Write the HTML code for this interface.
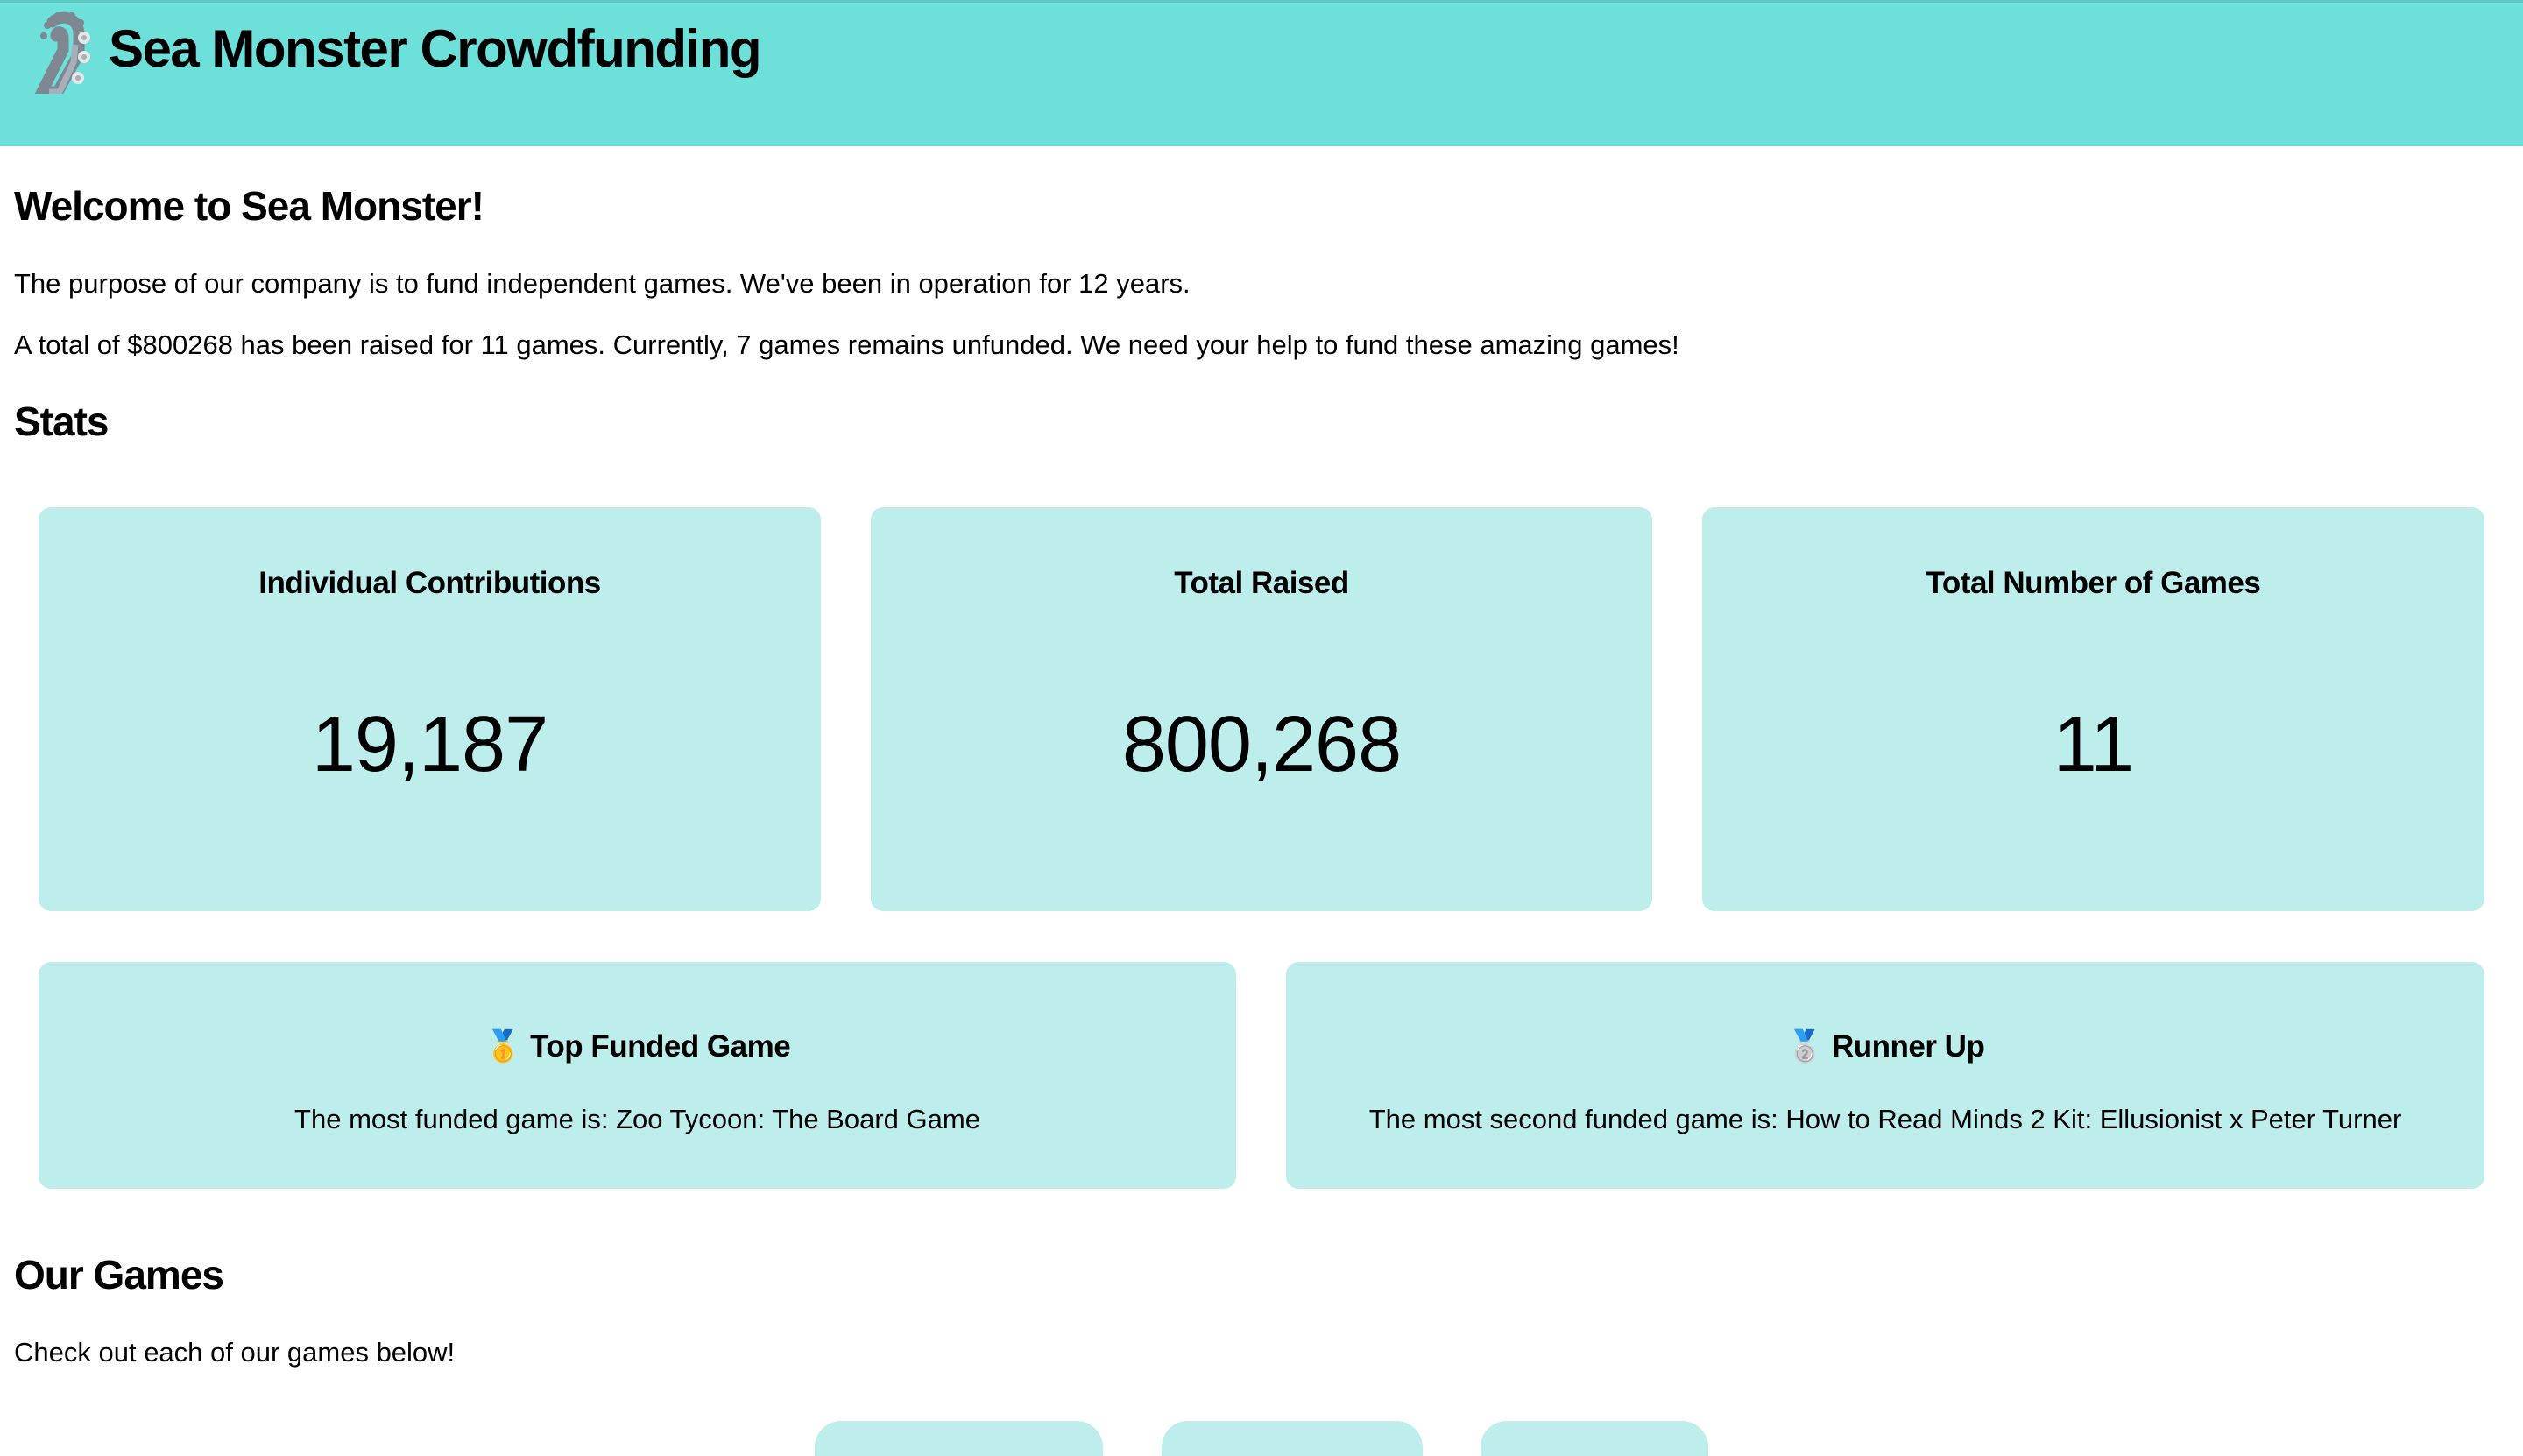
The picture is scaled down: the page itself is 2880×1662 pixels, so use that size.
<!DOCTYPE html>
<html><head><meta charset="utf-8"><style>
*{margin:0;padding:0;box-sizing:border-box}
body{width:2880px;height:1640px;overflow:hidden;background:#fff;font-family:"Liberation Sans",sans-serif;color:#000;position:relative}
.hdr{position:absolute;left:0;top:0;width:2880px;height:167px;background:#6ce0d9;border-top:3px solid #5cc9c2}
.hdr h1{position:absolute;left:124px;top:18px;font-size:60px;letter-spacing:-1.5px;font-weight:bold}
.abs{position:absolute;white-space:nowrap}
h2{font-size:46px;font-weight:bold;letter-spacing:-1px}
p{font-size:31px;letter-spacing:0}
.card{position:absolute;background:#bdeeeb;border-radius:14px;text-align:center}
.ct{font-size:35px;font-weight:bold;letter-spacing:-0.5px;position:absolute;left:0;right:0}
.num{font-size:90px;position:absolute;left:0;right:0;letter-spacing:-1px}
.pill{position:absolute;top:1622px;height:40px;background:#bdeeeb;border-radius:30px 30px 0 0}
</style></head><body>
<div class="hdr">
<svg style="position:absolute;left:38px;top:8px" width="72" height="96" viewBox="0 0 72 96">
<path d="M22 14 C34 4 52 10 52 28 L52 50 L28 94 L10 94 L34 46 L34 32 C34 24 26 24 26 30" fill="none" stroke="#7f8793" stroke-width="13" stroke-linecap="round"/>
<path d="M48 40 L46 60 L30 94 L18 94" fill="none" stroke="#a9afba" stroke-width="7"/>
<circle cx="16" cy="18" r="4" fill="#7f8793"/><circle cx="12" cy="30" r="4" fill="#7f8793"/><circle cx="28" cy="7" r="4" fill="#7f8793"/><circle cx="44" cy="7" r="4" fill="#7f8793"/><circle cx="54" cy="15" r="4" fill="#7f8793"/>
<circle cx="58" cy="32" r="7" fill="#e6e6e6"/><circle cx="58" cy="32" r="3" fill="#a9afba"/>
<circle cx="58" cy="54" r="7" fill="#e6e6e6"/><circle cx="58" cy="54" r="3" fill="#a9afba"/>
<circle cx="51" cy="78" r="7" fill="#e6e6e6"/><circle cx="51" cy="78" r="3" fill="#a9afba"/>
</svg>
<h1>Sea Monster Crowdfunding</h1>
</div>
<h2 class="abs" style="left:16px;top:208px">Welcome to Sea Monster!</h2>
<p class="abs" style="left:16px;top:306px">The purpose of our company is to fund independent games. We've been in operation for 12 years.</p>
<p class="abs" style="left:16px;top:376px">A total of $800268 has been raised for 11 games. Currently, 7 games remains unfunded. We need your help to fund these amazing games!</p>
<h2 class="abs" style="left:16px;top:454px">Stats</h2>

<div class="card" style="left:44px;top:579px;width:893px;height:461px"><div class="ct" style="top:67px">Individual Contributions</div><div class="num" style="top:220px">19,187</div></div>
<div class="card" style="left:994px;top:579px;width:892px;height:461px"><div class="ct" style="top:67px">Total Raised</div><div class="num" style="top:220px">800,268</div></div>
<div class="card" style="left:1943px;top:579px;width:893px;height:461px"><div class="ct" style="top:67px">Total Number of Games</div><div class="num" style="top:220px">11</div></div>

<div class="card" style="left:44px;top:1098px;width:1367px;height:259px"><div class="ct" style="top:76px">🥇 Top Funded Game</div><p style="position:absolute;left:0;right:0;top:162px">The most funded game is: Zoo Tycoon: The Board Game</p></div>
<div class="card" style="left:1468px;top:1098px;width:1368px;height:259px"><div class="ct" style="top:76px">🥈 Runner Up</div><p style="position:absolute;left:0;right:0;top:162px">The most second funded game is: How to Read Minds 2 Kit: Ellusionist x Peter Turner</p></div>

<h2 class="abs" style="left:16px;top:1428px">Our Games</h2>
<p class="abs" style="left:16px;top:1526px">Check out each of our games below!</p>
<div class="pill" style="left:930px;width:329px"></div>
<div class="pill" style="left:1326px;width:298px"></div>
<div class="pill" style="left:1690px;width:260px"></div>
</body></html>
